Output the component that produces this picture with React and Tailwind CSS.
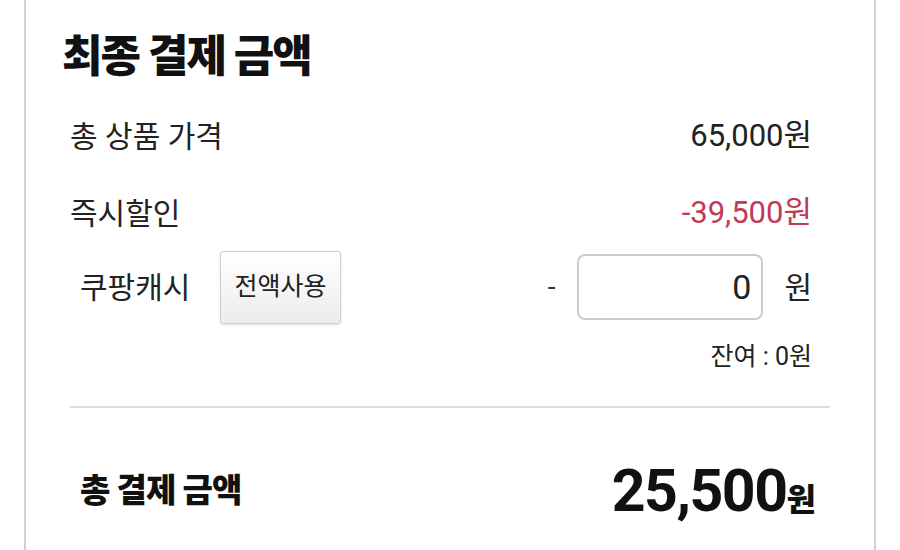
import React, { useState } from "react";

const font = { fontFamily: "Roboto, 'Noto Sans CJK KR', sans-serif" };

export default function App() {
  const [cash, setCash] = useState("0");

  return (
    <div className="w-[900px] h-[550px] bg-white overflow-hidden" style={font}>
      <div className="ml-[24px] w-[852px] h-[560px] -mt-[5px] border-x-2 border-[#d0d0d0] bg-white">
        {/* title */}
        <div className="pt-[34px] pl-[36px] h-[103px]">
          <h1 className="text-[44px] leading-[56px] font-black text-[#111] tracking-[-2px]">
            최종 결제 금액
          </h1>
        </div>

        <div className="pl-[44px] pr-[62px]">
          <Row label="총 상품 가격" value="65,000원" />
          <Row label="즉시할인" value="-39,500원" red />

          {/* cash row */}
          <div className="h-[74px] flex items-center -mt-[2px]">
            <div className="pl-[10px] w-[150px] text-[30px] text-[#222]">쿠팡캐시</div>
            <button
              type="button"
              onClick={() => setCash("0")}
              className="w-[121px] h-[73px] rounded-[3px] border border-[#cfcfcf] bg-gradient-to-b from-white to-[#ececec] text-[25px] text-[#222] shadow-sm"
            >
              전액사용
            </button>
            <div className="flex-1" />
            <span className="text-[28px] text-[#333] mr-[22px]">-</span>
            <input
              value={cash}
              onChange={(e) => setCash(e.target.value)}
              className="w-[186px] h-[66px] rounded-[8px] border-2 border-[#c9cdcd] text-right pr-[10px] text-[34px] text-[#222] outline-none"
              style={font}
            />
            <span className="ml-[21px] text-[30px] text-[#222]">원</span>
          </div>

          <div className="text-right text-[25px] text-[#222] mt-[14px] h-[36px]">잔여 : 0원</div>
        </div>

        <div className="mx-[44px] mt-[32px] border-t-2 border-[#dcdcdc]" />

        <div className="pl-[54px] pr-[58px] h-[166px] flex items-center justify-between">
          <div className="text-[33px] font-black text-[#111] tracking-[-1px]">총 결제 금액</div>
          <div className="font-bold text-[#111] flex items-baseline">
            <span className="text-[59px] tracking-[-1.5px]">25,500</span>
            <span className="text-[32px] font-black">원</span>
          </div>
        </div>
      </div>
    </div>
  );
}

function Row({ label, value, red }) {
  return (
    <div className="h-[77px] flex items-center justify-between">
      <div className="text-[30px] text-[#222]">{label}</div>
      <div className={`text-[31px] ${red ? "text-[#c03a5a]" : "text-[#222]"}`}>{value}</div>
    </div>
  );
}
